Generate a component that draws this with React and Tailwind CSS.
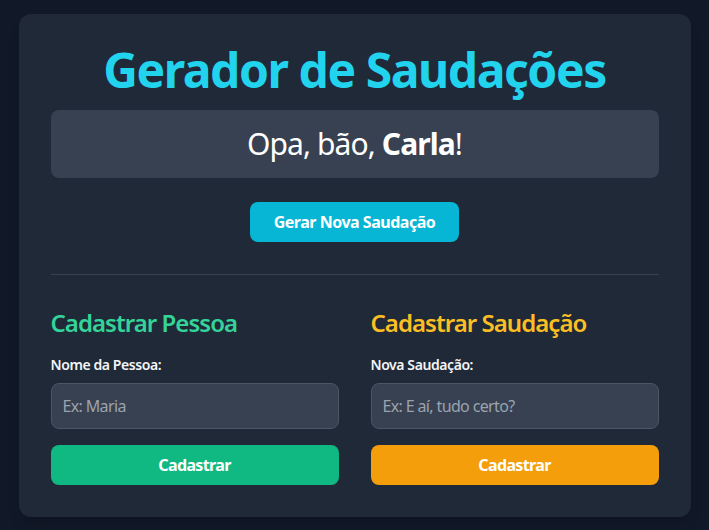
import React, { useState } from "react";

export default function App() {
  const [nome, setNome] = useState("");
  const [saud, setSaud] = useState("");
  return (
    <div
      className="min-h-screen bg-[#111827] flex items-center justify-center"
      style={{ fontFamily: '"Noto Sans", "Open Sans", sans-serif' }}
    >
      <div className="w-full max-w-2xl bg-[#1f2937] rounded-xl p-8 shadow-lg">
        <h1 className="text-5xl leading-none font-bold tracking-[-0.03em] text-[#22d3ee] text-center mb-4">
          Gerador de Saudações
        </h1>
        <div className="bg-[#374151] rounded-lg p-4 text-center text-3xl leading-9 tracking-[-0.03em] text-white">
          Opa, bão, <span className="font-bold">Carla</span>!
        </div>
        <div className="flex justify-center mt-6">
          <button className="bg-[#06b6d4] text-white font-bold text-base leading-6 tracking-[-0.03em] px-6 py-2 rounded-lg">
            Gerar Nova Saudação
          </button>
        </div>
        <div className="border-t border-[#374151] my-8" />
        <div className="grid grid-cols-2 gap-8">
          <div>
            <h2 className="text-2xl leading-8 font-semibold tracking-[-0.04em] text-[#34d399] mb-4">
              Cadastrar Pessoa
            </h2>
            <label className="block text-sm leading-5 font-semibold tracking-[-0.03em] text-gray-100 mb-2">
              Nome da Pessoa:
            </label>
            <input
              value={nome}
              onChange={(e) => setNome(e.target.value)}
              placeholder="Ex: Maria"
              className="block w-full h-[46px] px-[11px] bg-[#374151] border border-[#4b5563] rounded-lg text-base tracking-[-0.04em] text-white placeholder-[#9ca3af] mb-4 outline-none"
            />
            <button className="w-full h-10 bg-[#10b981] text-white font-bold text-base tracking-[-0.04em] rounded-lg">
              Cadastrar
            </button>
          </div>
          <div>
            <h2 className="text-2xl leading-8 font-semibold tracking-[-0.04em] text-[#fbbf24] mb-4">
              Cadastrar Saudação
            </h2>
            <label className="block text-sm leading-5 font-semibold tracking-[-0.03em] text-gray-100 mb-2">
              Nova Saudação:
            </label>
            <input
              value={saud}
              onChange={(e) => setSaud(e.target.value)}
              placeholder="Ex: E aí, tudo certo?"
              className="block w-full h-[46px] px-[11px] bg-[#374151] border border-[#4b5563] rounded-lg text-base tracking-[-0.04em] text-white placeholder-[#9ca3af] mb-4 outline-none"
            />
            <button className="w-full h-10 bg-[#f59e0b] text-white font-bold text-base tracking-[-0.04em] rounded-lg">
              Cadastrar
            </button>
          </div>
        </div>
      </div>
    </div>
  );
}
